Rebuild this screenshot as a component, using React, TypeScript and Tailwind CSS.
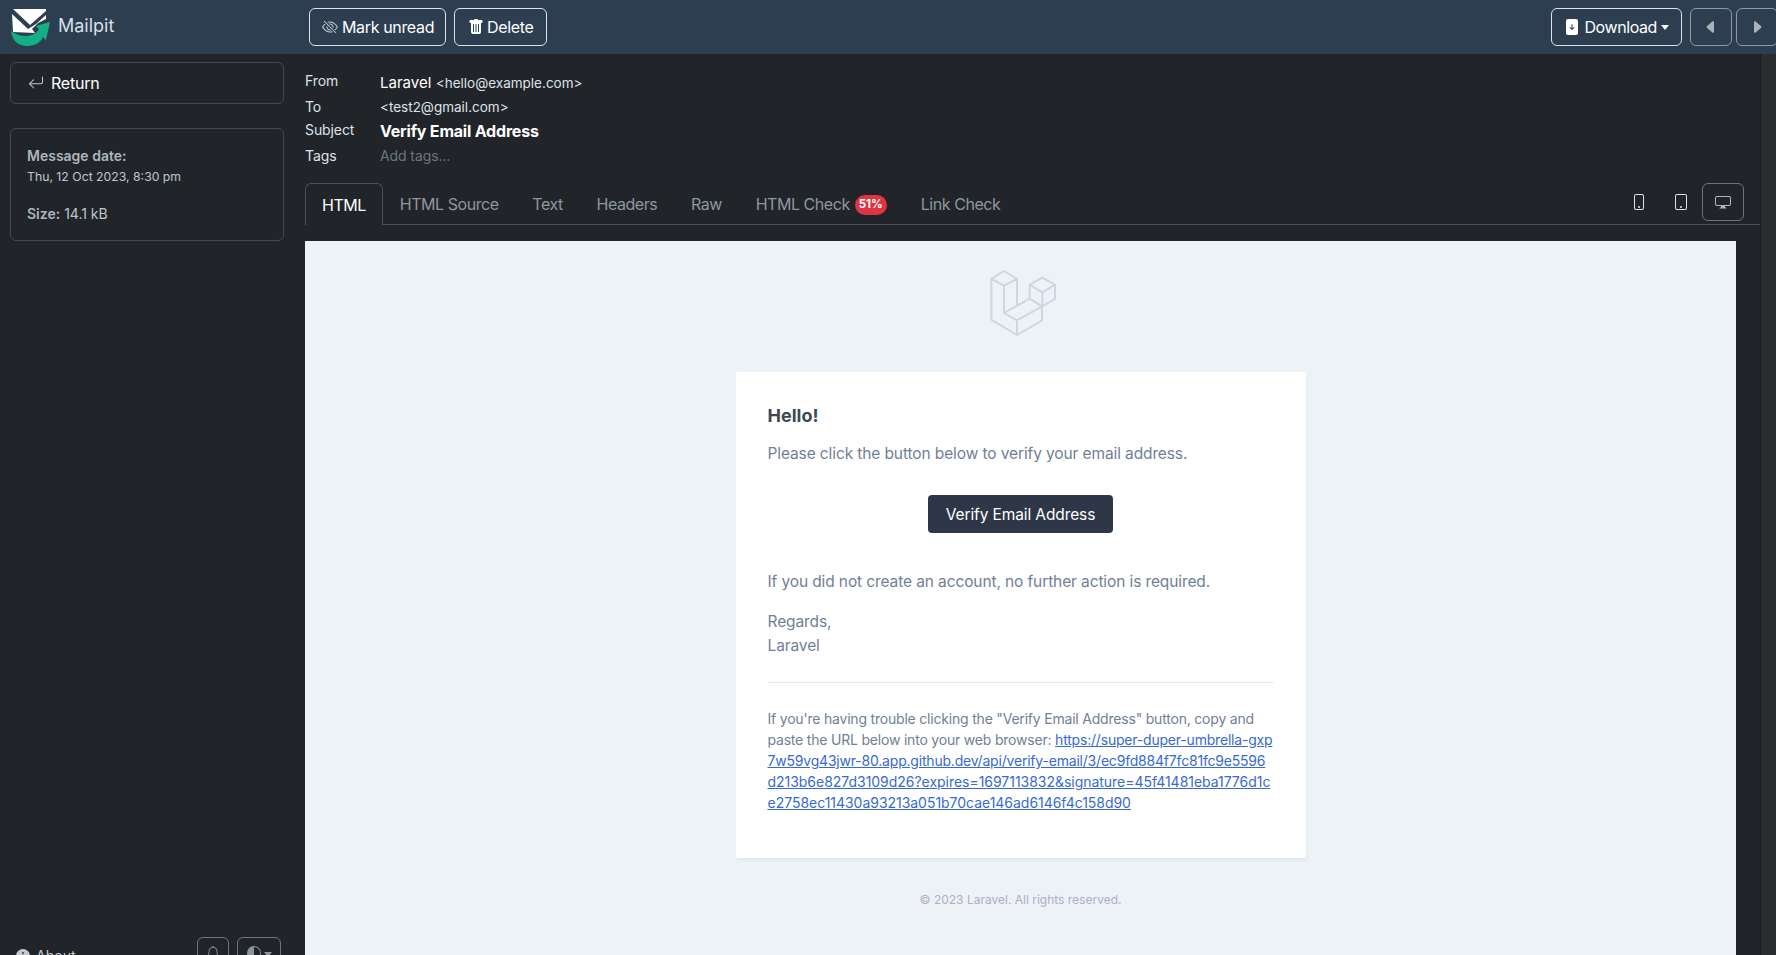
import {
  BsArrowReturnLeft,
  BsBell,
  BsCaretLeftFill,
  BsCaretRightFill,
  BsCircleHalf,
  BsDisplay,
  BsEyeSlash,
  BsFileArrowDownFill,
  BsInfoCircleFill,
  BsPhone,
  BsTablet,
  BsTrashFill,
} from 'react-icons/bs';

const tabs = ['HTML Source', 'Text', 'Headers', 'Raw'];

function Logo() {
  return (
    <svg viewBox="0 0 42 38" className="w-[42px] h-[38px] shrink-0">
      <path d="M1 23 C2 33 9 38 17 38 C25 38 31 34 33 29 L36 32 L40 14 L26 18 L29 21 C26 26 21 28 16 28 C10 28 5 26 1 23 Z" fill="#13b086" />
      <path d="M3 1 H36 V3 L20 17 Z" fill="#ffffff" />
      <path d="M2 6 L18 21 L26 16 L36 7 V11 L28 15 L22 21 L25 25 L3 24 Z" fill="#ffffff" />
    </svg>
  );
}

function LaravelMark() {
  return (
    <svg
      viewBox="1165 355 210 210"
      className="w-[70px] h-[70px]"
      fill="none"
      stroke="#cfd6e1"
      strokeWidth="6"
      strokeLinejoin="round"
    >
      <path d="M1175 388 L1213 364 L1252 388 L1213 408 Z" />
      <path d="M1175 388 V510 L1252 556 L1327 512 V470" />
      <path d="M1213 408 V490 L1252 512 V556" />
      <path d="M1252 388 V468" />
      <path d="M1213 490 L1290 447 L1327 470 L1252 512" />
      <path d="M1290 405 L1328 384 L1366 405 L1328 428 Z" />
      <path d="M1290 405 V447" />
      <path d="M1328 428 V470" />
      <path d="M1366 405 V448 L1327 470" />
    </svg>
  );
}

function HeaderRow({ label, labelClass, className, children }: { label: string; labelClass: string; className: string; children: React.ReactNode }) {
  return (
    <div className={`flex ${className}`}>
      <div className={`w-[75px] shrink-0 text-[14px] tracking-[-0.1px] text-[#dee2e6] ${labelClass}`}>{label}</div>
      <div>{children}</div>
    </div>
  );
}

export default function App() {
  return (
    <div
      className="h-screen overflow-hidden flex flex-col bg-[#212529] text-[#dee2e6]"
      style={{ fontFamily: 'Inter, "Liberation Sans", sans-serif' }}
    >
      {/* top bar */}
      <div className="h-[54px] shrink-0 flex items-center bg-[#2c3e50]">
        <div className="w-[309px] shrink-0 flex items-center pl-[10px] gap-[6px]">
          <Logo />
          <span className="text-[18px] -mt-[4px] text-[#d9dfe5]">Mailpit</span>
        </div>
        <div className="flex gap-[8px] tracking-[-0.35px]">
          <button className="h-[38px] pl-[12px] pr-[11px] flex items-center gap-[4px] rounded-[6px] border border-[#dee2e6] text-[16px] text-white">
            <BsEyeSlash className="w-[16px] h-[16px] text-[#c5ccd3]" />
            Mark unread
          </button>
          <button className="h-[38px] px-[13px] flex items-center gap-[3px] rounded-[6px] border border-[#dee2e6] text-[16px] text-white">
            <BsTrashFill className="w-[16px] h-[16px]" />
            Delete
          </button>
        </div>
        <div className="ml-auto -mr-[2px] flex">
          <button className="h-[38px] pl-[12px] pr-[12px] flex items-center gap-[4px] rounded-[6px] border border-[#dee2e6] text-[16px] tracking-[-0.4px] text-white">
            <BsFileArrowDownFill className="w-[16px] h-[16px]" />
            Download
            <span className="border-x-[4.5px] border-t-[5px] border-x-transparent border-t-white" />
          </button>
          <button className="ml-[8px] w-[42px] h-[38px] flex items-center justify-center rounded-[6px] border border-[#8d98a3] text-[#a9b2bb]">
            <BsCaretLeftFill className="w-[16px] h-[16px]" />
          </button>
          <button className="ml-[4px] w-[42px] h-[38px] flex items-center justify-center rounded-[6px] border border-[#8d98a3] text-[#a9b2bb]">
            <BsCaretRightFill className="w-[16px] h-[16px]" />
          </button>
        </div>
      </div>

      <div className="flex-1 min-h-0 flex">
        {/* sidebar */}
        <div className="w-[305px] shrink-0 pl-[10px] pr-[21px] pt-[8px]">
          <div className="h-[42px] flex items-center gap-[7px] pl-[17px] rounded-[6px] border border-[#43484d] text-[16px] tracking-[-0.2px] text-white">
            <BsArrowReturnLeft className="w-[16px] h-[16px] text-[#c5c9cd]" />
            Return
          </div>
          <div className="h-[113px] mt-[24px] px-[16px] pt-[17px] rounded-[6px] border border-[#43484d] text-[#adb5bd]">
            <div className="text-[14px] leading-[20px] font-semibold">Message date:</div>
            <div className="text-[12.25px] leading-[18px] mt-[2px] text-[#c0c5ca]">Thu, 12 Oct 2023, 8:30 pm</div>
            <div className="text-[14px] leading-[20px] mt-[18px]">
              <span className="font-semibold">Size:</span> <span className="text-[14px] text-[#c0c5ca]">14.1 kB</span>
            </div>
          </div>
          <div className="mt-[696px] flex items-start">
            <div className="flex items-center gap-[6px] pl-[6px] pt-[8px] text-[14px] text-[#c5c9cd]">
              <BsInfoCircleFill className="w-[14px] h-[14px]" />
              About
            </div>
            <div className="ml-auto flex gap-[8px] mr-[3px]">
              <div className="w-[32px] h-[31px] flex justify-center pt-[8px] rounded-[6px] border border-[#6c757d] text-[#8d949b]">
                <BsBell className="w-[14px] h-[14px]" />
              </div>
              <div className="w-[44px] h-[31px] flex justify-center gap-[3px] pt-[8px] rounded-[6px] border border-[#6c757d] text-[#8d949b]">
                <BsCircleHalf className="w-[14px] h-[14px]" />
                <span className="mt-[6px] border-x-[4px] border-t-[5px] border-x-transparent border-t-[#8d949b]" />
              </div>
            </div>
          </div>
        </div>

        {/* message */}
        <div className="flex-1 min-w-0 flex flex-col">
          <div className="h-[129px] shrink-0 pt-[16px]">
            <HeaderRow label="From" labelClass="" className="h-[25px] leading-[21px]">
              <span className="block mt-[2px]">
                <span className="text-[15px] text-white">Laravel</span>{' '}
                <span className="text-[13.5px] text-[#dee2e6]">&lt;hello@example.com&gt;</span>
              </span>
            </HeaderRow>
            <HeaderRow label="To" labelClass="mt-[1px]" className="h-[23px] leading-[22px]">
              <span className="text-[13.5px] text-[#dee2e6]">&lt;test2@gmail.com&gt;</span>
            </HeaderRow>
            <HeaderRow label="Subject" labelClass="mt-[1px]" className="h-[25px] leading-[22px]">
              <span className="block mt-[2px] text-[16px] font-bold tracking-[-0.2px] text-white">Verify Email Address</span>
            </HeaderRow>
            <HeaderRow label="Tags" labelClass="mt-[1px]" className="h-[24px] leading-[24px]">
              <span className="block mt-[1px] text-[14px] tracking-[-0.1px] text-[#6c757d]">Add tags...</span>
            </HeaderRow>
          </div>

          <div className="h-[42px] shrink-0 flex items-end border-b border-[#495057] text-[16px] tracking-[-0.45px] text-[#8f969d]">
            <div className="h-[42px] -mb-[1px] px-[16px] flex items-center rounded-t-[6px] border border-b-0 border-[#495057] bg-[#212529] text-white">
              HTML
            </div>
            {tabs.map((t) => (
              <div key={t} className="h-[41px] px-[16.85px] flex items-center">
                {t}
              </div>
            ))}
            <div className="h-[41px] pl-[16.85px] pr-[17px] flex items-center">
              HTML Check
              <span className="ml-[5px] mt-[3px] px-[4px] h-[20px] flex items-center rounded-full bg-[#dc3545] text-[11.5px] font-bold tracking-normal text-white">
                51%
              </span>
            </div>
            <div className="h-[41px] px-[17px] flex items-center">Link Check</div>
            <div className="ml-auto mr-[16px] self-start flex items-center text-[#dee2e6]">
              <div className="w-[42px] h-[38px] flex items-center justify-center">
                <BsPhone className="w-[16px] h-[16px]" />
              </div>
              <div className="w-[42px] h-[38px] flex items-center justify-center">
                <BsTablet className="w-[16px] h-[16px]" />
              </div>
              <div className="w-[42px] h-[38px] flex items-center justify-center rounded-[6px] border border-[#6c757d] text-[#adb5bd]">
                <BsDisplay className="w-[16px] h-[16px]" />
              </div>
            </div>
          </div>

          {/* rendered email */}
          <div className="flex-1 min-h-0 mt-[16px] mr-[24px] bg-[#edf2f7] flex flex-col items-center overflow-hidden">
            <div className="h-[131px] shrink-0 flex items-start pt-[27px] pl-[5px]">
              <LaravelMark />
            </div>
            <div className="w-[570px] shrink-0 h-[486px] bg-white rounded-[2px] shadow-[0_2px_0_rgba(0,0,150,0.025),2px_4px_0_rgba(0,0,150,0.015)] px-[32px] pt-[32px]">
              <div className="text-[18px] leading-[24px] font-bold text-[#3d4852]">Hello!</div>
              <p className="mt-[14px] text-[15.5px] tracking-[-0.11px] leading-[24px] text-[#718096]">
                Please click the button below to verify your email address.
              </p>
              <div className="mt-[29px] flex justify-center">
                <span className="h-[38px] pt-[1px] px-[18px] flex items-center rounded-[4px] bg-[#2d3748] text-[15.5px] tracking-[-0.11px] text-white">
                  Verify Email Address
                </span>
              </div>
              <p className="mt-[37px] text-[15.5px] tracking-[-0.11px] leading-[24px] text-[#718096]">
                If you did not create an account, no further action is required.
              </p>
              <p className="mt-[16px] text-[15.5px] tracking-[-0.11px] leading-[24px] text-[#718096]">
                Regards,
                <br />
                Laravel
              </p>
              <div className="mt-[24px] border-t border-[#e8e5ef]" />
              <p className="mt-[25px] text-[14px] tracking-[-0.2px] leading-[21px] text-[#718096]">
                If you're having trouble clicking the "Verify Email Address" button, copy and
                <br />
                paste the URL below into your web browser:{' '}
                <a className="text-[#3869d4] underline">
                  https://super-duper-umbrella-gxp
                  <br />
                  7w59vg43jwr-80.app.github.dev/api/verify-email/3/ec9fd884f7fc81fc9e5596
                  <br />
                  <span className="tracking-[-0.03px]">d213b6e827d3109d26?expires=1697113832&amp;signature=45f41481eba1776d1c</span>
                  <br />
                  <span className="tracking-[-0.03px]">e2758ec11430a93213a051b70cae146ad6146f4c158d90</span>
                </a>
              </p>
            </div>
            <div className="mt-[33px] text-[12px] leading-[18px] text-[#b0adc5]">© 2023 Laravel. All rights reserved.</div>
          </div>
        </div>

        {/* page scrollbar */}
        <div className="w-[16px] shrink-0 bg-[#2b2c2e] border-l border-[#1a1c1e]" />
      </div>
    </div>
  );
}
